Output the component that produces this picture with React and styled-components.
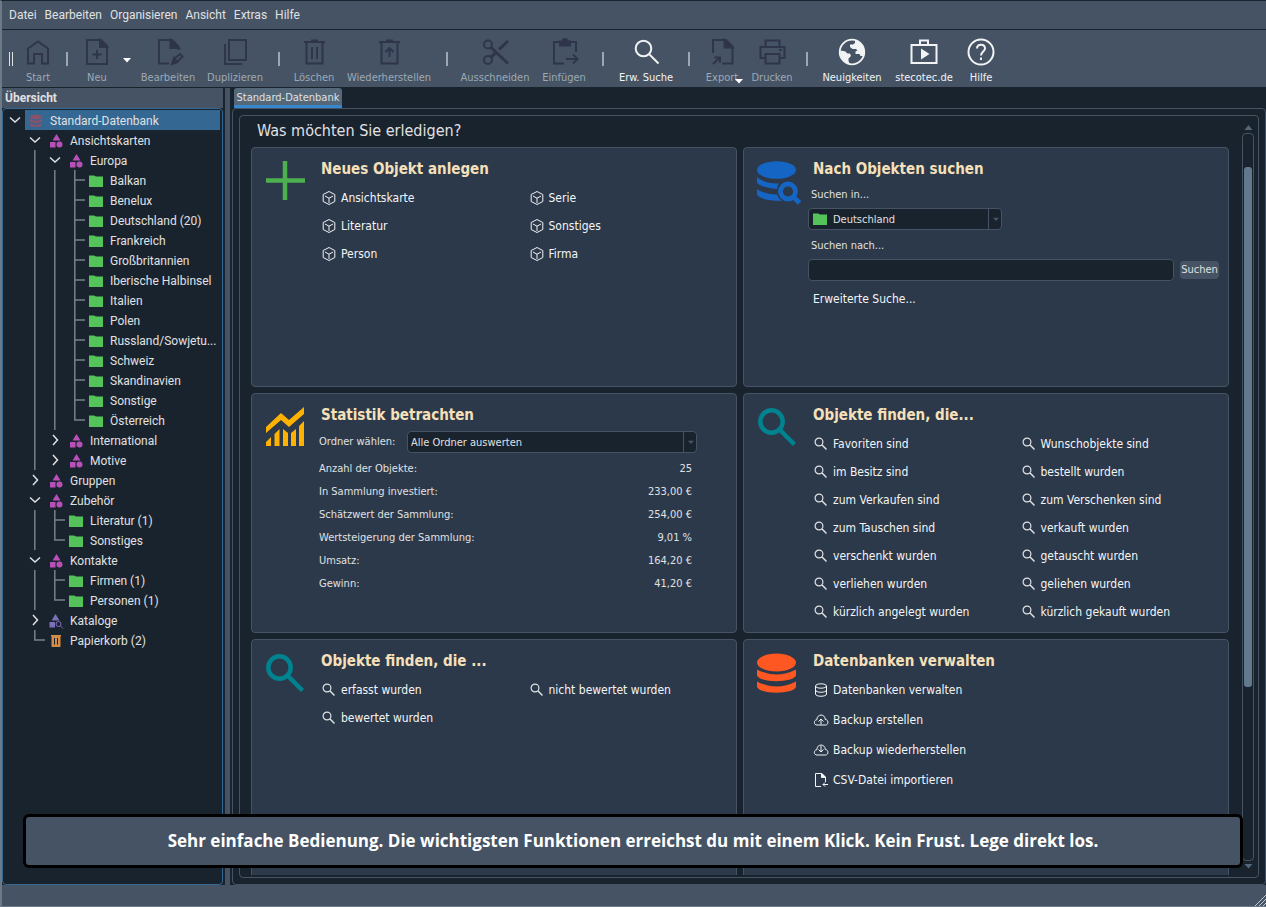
import React from "react";
import styled, { createGlobalStyle } from "styled-components";

const colors = {
  base: "#19232d",
  bar: "#455364",
  card: "#2b394a",
  line: "#455364",
  tab: "#54687a",
  thumb: "#60798b",
  select: "#346792",
  accent: "#3787cf",
  text: "#e0e1e3",
  title: "#f6e0ba",
  muted: "#9da9b5",
  iconOff: "#2f354a",
};

const uiFont = `Roboto, "Open Sans", sans-serif`;
const bannerFont = `"Open Sans", "Noto Sans", sans-serif`;
const dialogFont = `"DejaVu Sans Condensed", "Noto Sans", sans-serif`;

const GlobalStyle = createGlobalStyle`
  * {
    box-sizing: border-box;
  }
  body {
    margin: 0;
    background: ${colors.base};
    color: ${colors.text};
    font-family: ${uiFont};
    font-size: 12px;
  }
  button, input, select {
    font: inherit;
    color: inherit;
  }
`;

const Window = styled.div`
  display: flex;
  flex-direction: column;
  height: 100vh;
  min-width: 1020px;
  border-left: 2px solid #6c7a86;
  border-top: 1px solid ${colors.base};
  overflow: hidden;
  position: relative;
`;

const MenuBar = styled.nav`
  display: flex;
  flex: none;
  align-items: center;
  gap: 8px;
  height: 29px;
  padding: 0 7px;
  background: ${colors.bar};
  border-bottom: 1px solid ${colors.base};
`;

const MenuButton = styled.button`
  padding: 0;
  border: 0;
  background: none;
`;

const ToolBar = styled.div`
  display: flex;
  flex: none;
  height: 57px;
  padding-left: 7px;
  background: ${colors.bar};
`;

const Handle = styled.span`
  align-self: center;
  width: 4px;
  height: 14px;
  margin-right: 5px;
  border: solid ${colors.text};
  border-width: 0 1px;
`;

const Separator = styled.span`
  align-self: center;
  width: 2px;
  height: 14px;
  margin: 0 8px;
  background: #9da6b1;
`;

const Tool = styled.button`
  display: flex;
  flex-direction: column;
  align-items: center;
  gap: 5px;
  width: ${(props) => props.$width}px;
  padding: 8px 0 0;
  border: 0;
  background: none;
  font-family: ${dialogFont};
  font-size: 11px;
  line-height: 14px;
  white-space: nowrap;
  color: #f2f3f4;
  position: relative;
  &:disabled {
    color: ${colors.muted};
  }
  &:disabled > svg:first-child {
    color: ${colors.iconOff};
  }
`;

const ToolArrow = styled.button`
  width: 18px;
  padding: 0;
  border: 0;
  background: none;
  color: #fff;
`;

const ExportArrow = styled.svg`
  position: absolute;
  right: 3px;
  bottom: 3px;
  color: #fff;
`;

const Main = styled.div`
  display: flex;
  flex: 1;
  min-height: 0;
  border-top: 1px solid ${colors.base};
`;

const Dock = styled.aside`
  display: flex;
  flex-direction: column;
  flex: none;
  width: 221px;
`;

const DockTitle = styled.h2`
  margin: 0;
  padding: 0 3px;
  height: 20px;
  line-height: 20px;
  background: ${colors.bar};
  font-size: 12px;
  font-weight: 700;
`;

const Tree = styled.div`
  flex: 1;
  min-height: 0;
  padding: 1px 2px;
  border: 1px solid ${colors.select};
  border-radius: 4px;
`;

const TreeRow = styled.div`
  display: flex;
  height: 20px;
`;

const Slot = styled.svg`
  flex: none;
  width: 20px;
  height: 20px;
  stroke: ${(props) => (props.$guide ? "#77818c" : "#dfe1e4")};
  stroke-width: 1.5;
  fill: none;
`;

const TreeLabel = styled.div`
  display: flex;
  flex: 1;
  align-items: center;
  gap: 6px;
  padding: 1px 0 0 3px;
  line-height: 20px;
  white-space: nowrap;
  background: ${(props) => (props.$selected ? colors.select : "none")};
`;

const Splitter = styled.div`
  flex: none;
  width: 5px;
  margin: 0 2px;
  background: ${colors.bar};
`;

const Pane = styled.section`
  display: flex;
  flex-direction: column;
  flex: 1;
  min-width: 0;
`;

const Tab = styled.button`
  align-self: flex-start;
  width: 108px;
  height: 20px;
  margin-left: 2px;
  padding: 2px 0 0;
  border: 0;
  border-bottom: 3px solid ${colors.accent};
  border-radius: 3px 3px 0 0;
  background: ${colors.tab};
  font-family: ${dialogFont};
  font-size: 11px;
  line-height: 15px;
  white-space: nowrap;
`;

const TabBody = styled.div`
  display: flex;
  flex: 1;
  min-height: 0;
  padding: 6px;
  border: 1px solid ${colors.line};
  border-radius: 4px;
`;

const Frame = styled.div`
  display: flex;
  flex: 1;
  min-width: 0;
  padding-bottom: 2px;
  border: 1px solid ${colors.line};
  border-radius: 4px;
`;

const Scroll = styled.div`
  flex: 1;
  min-width: 0;
  padding-left: 11px;
  overflow: hidden;
`;

const Question = styled.h1`
  margin: 0;
  padding: 4px 6px 0;
  height: 31px;
  font-family: ${dialogFont};
  font-size: 16px;
  line-height: 22px;
  font-weight: 400;
`;

const Cards = styled.div`
  display: grid;
  grid-template-columns: 1fr 1fr;
  grid-auto-rows: 240px;
  gap: 6px;
`;

const CardBox = styled.section`
  display: flex;
  gap: 12px;
  padding: 11px 0 0 13px;
  background: ${colors.card};
  border: 1px solid ${colors.line};
  border-radius: 4px;
  font-family: ${dialogFont};
`;

const CardIcon = styled.svg`
  flex: none;
  width: 44px;
  height: 44px;
  margin-top: 2px;
  color: ${(props) => props.$color};
`;

const CardContent = styled.div`
  flex: 1;
  min-width: 0;
`;

const CardTitle = styled.h2`
  margin: 0 0 5px;
  font-size: 15px;
  line-height: 20px;
  font-weight: 700;
  color: ${colors.title};
`;

const LinkGrid = styled.div`
  display: grid;
  grid-template-columns: ${(props) => (props.$single ? "1fr" : "1fr 1fr")};
  grid-auto-rows: ${(props) => (props.$single ? 30 : 28)}px;
`;

const IconLink = styled.a`
  display: flex;
  align-items: center;
  gap: 4px;
  height: 28px;
  font-size: 12px;
  color: #f4f5f6;
  text-decoration: none;
  white-space: nowrap;
  & svg {
    flex: none;
  }
`;

const Form = styled.form`
  display: flex;
  flex-direction: column;
  align-items: flex-start;
  margin-left: -5px;
  padding-top: 2px;
  font-size: 11px;
`;

const FieldLabel = styled.label`
  padding-left: 3px;
  line-height: 18px;
  white-space: nowrap;
`;

const SelectBox = styled.div`
  position: relative;
  width: ${(props) => props.$width}px;
  height: 22px;
  margin: ${(props) => props.$margin || 0};
`;

const Select = styled.select`
  width: 100%;
  height: 100%;
  padding: 0 20px 0 ${(props) => (props.$icon ? 24 : 3)}px;
  appearance: none;
  background: ${colors.base};
  border: 1px solid ${colors.line};
  border-radius: 4px;
`;

const SelectIcon = styled.span`
  position: absolute;
  left: 4px;
  top: 3px;
  height: 16px;
  pointer-events: none;
`;

const SelectArrow = styled.span`
  position: absolute;
  right: 0;
  top: 0;
  display: grid;
  place-items: center;
  width: 14px;
  height: 22px;
  border-left: 1px solid ${colors.line};
  color: ${colors.line};
  pointer-events: none;
`;

const SearchLine = styled.div`
  display: flex;
  align-items: center;
  gap: 6px;
  width: 100%;
  padding-right: 9px;
  margin: 4px 0;
`;

const SearchInput = styled.input`
  flex: 1;
  min-width: 0;
  height: 22px;
  background: ${colors.base};
  border: 1px solid ${colors.line};
  border-radius: 4px;
`;

const SearchButton = styled.button`
  width: 39px;
  height: 18px;
  padding: 0;
  border: 0;
  border-radius: 4px;
  background: ${colors.bar};
  line-height: 18px;
`;

const FolderLine = styled.div`
  display: flex;
  align-items: center;
  justify-content: space-between;
  margin: 0 39px 4px -5px;
  padding-top: 1px;
  font-size: 11px;
`;

const Stats = styled.table`
  width: calc(100% - 39px);
  margin-left: -2px;
  border-collapse: collapse;
  font-size: 11px;
  & th {
    padding: 0;
    height: 23px;
    font-weight: 400;
    text-align: left;
  }
  & td {
    padding: 0 3px 0 0;
    text-align: right;
  }
`;

const ScrollBar = styled.div`
  display: flex;
  flex-direction: column;
  align-items: center;
  flex: none;
  width: 12px;
  margin: 9px 4px 6px 13px;
  gap: 3px;
  color: ${colors.tab};
`;

const Track = styled.div`
  flex: 1;
  width: 12px;
  padding: 33px 1px 0;
  border: 1px solid ${colors.line};
  border-radius: 4px;
`;

const Thumb = styled.div`
  height: 75%;
  border-radius: 3px;
  background: ${colors.thumb};
`;

const StatusBar = styled.footer`
  display: flex;
  flex: none;
  align-items: flex-end;
  justify-content: flex-end;
  height: 22px;
  background: ${colors.bar};
  border-bottom: 1px solid #6c7a86;
`;

const Banner = styled.div`
  position: absolute;
  left: 21px;
  right: 23px;
  bottom: 39px;
  height: 54px;
  line-height: 47px;
  text-align: center;
  background: ${colors.bar};
  border: 3px solid #000;
  border-radius: 6px;
  font-family: ${bannerFont};
  font-size: 17px;
  font-weight: 700;
  color: #fff;
  white-space: nowrap;
`;

/* ---------- toolbar icons, drawn on a 28px grid ---------- */

const toolIcons = {
  home: <path d="M4 10.500 14 3.500 24 10.500V25.500H18V16H10V25.500H4Z" />,
  file: (
    <>
      <path d="M4 2H18L24 8V26H4Z" />
      <path d="M17 2V9H24Z" fill="currentColor" />
      <path d="M14 12V21M9.500 16.500H18.500" />
    </>
  ),
  edit: (
    <>
      <path d="M15 25.500H5V2H18L24.500 8.500V12" />
      <path d="M16.500 2V10H24.500Z" fill="currentColor" />
      <path d="M19 25 20 21 26 16 28.500 18.500 23 24Z" />
      <path d="M18 26 20 20 23.500 24Z" fill="currentColor" />
    </>
  ),
  copy: (
    <>
      <path d="M8 2H25V22H8Z" />
      <path d="M4 6V26H21" />
    </>
  ),
  trash: (
    <path d="M4 4H25M11 2.500H18M6.500 4V25.500H22.500V4M12 9V21M17 9V21" />
  ),
  restore: (
    <path d="M4 4H25M11 2.500H18M6.500 4V25.500H22.500V4M14.500 19V10M10.500 14 14.500 10 18.500 14" />
  ),
  cut: (
    <>
      <circle cx="7" cy="6.500" r="4" />
      <circle cx="7" cy="22" r="4" />
      <path d="M10 9.500 27 25.500M10 19 14 15.500M18 11.500 27 3" strokeWidth="3" />
    </>
  ),
  paste: (
    <>
      <path d="M14 25.500H4V4H26V14" />
      <path d="M10 3.500V7.500H20V3.500H17.500A2.500 2.500 0 0 0 12.500 3.500Z" fill="currentColor" />
      <path d="M16 21H27M23 16.500 27.500 21 23 25.500" />
    </>
  ),
  search: (
    <>
      <circle cx="11.500" cy="10.500" r="7.800" />
      <path d="M17 16 26.500 25.500" />
    </>
  ),
  export: (
    <>
      <path d="M5 15V2H18L24.500 8.500V25.500H14" />
      <path d="M16.500 2V9.500H24.500Z" fill="currentColor" />
      <path d="M5 26 11.500 20M6.500 19.500H12V25" />
    </>
  ),
  print: (
    <>
      <path d="M7.500 8.500V2.500H21.500V8.500M7.500 20H2.500V9H26.500V20H21.500" />
      <path d="M7.500 16H21.500V25.500H7.500ZM21 12H24" />
    </>
  ),
  globe: (
    <>
      <circle cx="14" cy="14" r="12.300" strokeWidth="1.800" />
      <path
        d="M17 2C22.500 3.500 26.500 8 26.500 14 26.500 15.500 26.300 16.500 25.500 18H22.500L21.500 16H17.500V13.500L19.500 12.500 18 11H14.500L12 9V6.500H15L17 5ZM2 12.500 7 13.200 9.500 15.500H12L13 18 10.500 20.500V23L12 26.500C6.500 25.500 2 20.500 2 12.500Z"
        fill="currentColor"
        stroke="none"
      />
    </>
  ),
  shop: (
    <>
      <path d="M1.500 7H26.500V25H1.500ZM10 7V2.500H18V7" />
      <path d="M11 10.500V21.500L19.500 16Z" fill="currentColor" stroke="none" />
    </>
  ),
  help: (
    <>
      <circle cx="14" cy="14" r="12.500" />
      <path d="M10 10.500C10 5.500 18 5.500 18 10.500 18 13.500 14 13.500 14 17.500M14 19.500V22" />
    </>
  ),
};

const ToolIcon = ({ name }) => (
  <svg
    width="28"
    height="28"
    viewBox="0 0 28 28"
    fill="none"
    stroke="currentColor"
    strokeWidth="2"
    overflow="visible"
    aria-hidden="true"
  >
    {toolIcons[name]}
  </svg>
);

const Down = ({ width = 8, up }) => (
  <svg width={width} height="5" viewBox="0 0 8 5" aria-hidden="true">
    <path d={up ? "M0 5H8L4 0Z" : "M0 0H8L4 4.500Z"} fill="currentColor" />
  </svg>
);

/* ---------- 16px icons ---------- */

const smallIcons = {
  database: (
    <g fill="#86536a">
      <ellipse cx="8" cy="4" rx="6" ry="2.500" />
      <path d="M2 6Q8 9.500 14 6V8.500Q8 12 2 8.500ZM2 10Q8 13.500 14 10V12.500Q8 16 2 12.500Z" />
    </g>
  ),
  category: (
    <g fill="#b94fb8">
      <path d="M8.500 1 12.500 7.500H4.500Z" />
      <path d="M2 9H7.500V14.500H2Z" />
      <circle cx="11.500" cy="11.500" r="3" />
    </g>
  ),
  catalog: (
    <g fill="#7d70b8">
      <path d="M7.500 1 11.500 7.500H3.500Z" />
      <path d="M1.500 9H7V14.500H1.500Z" />
      <circle cx="10.500" cy="11" r="2.500" fill="none" stroke="#7d70b8" />
      <path d="M12.500 13 15 15.500" stroke="#7d70b8" />
    </g>
  ),
  folder: <path d="M1 2.500H6L8 3.500H15V14H1Z" fill="#54c45a" />,
  bin: (
    <>
      <path d="M3 2H13V3.500H12.500V14H3.500V3.500H3Z" fill="#d18d47" />
      <path d="M6.500 5V11.500M9.500 5V11.500" stroke={colors.base} />
    </>
  ),
  cube: (
    <path
      d="M8 1.500 13.800 4.500V11.500L8 14.500 2.200 11.500V4.500ZM4 6 8 8.200 12 6M8 8.200V13"
      fill="none"
      stroke="currentColor"
    />
  ),
  search: (
    <g fill="none" stroke="currentColor" opacity="0.900">
      <circle cx="6" cy="6" r="3.900" strokeWidth="1.200" />
      <path d="M8.800 8.800 13.500 13.500" strokeWidth="1.500" />
    </g>
  ),
  stack: (
    <g fill="none" stroke="currentColor">
      <ellipse cx="8" cy="4" rx="5.500" ry="2.200" />
      <path d="M2.500 4V12C2.500 15 13.500 15 13.500 12V4M2.500 8C2.500 11 13.500 11 13.500 8" />
    </g>
  ),
  upload: (
    <g fill="none" stroke="currentColor">
      <path d="M4 13C.5 13 .5 8 3.800 7.800 4 1.500 12 1.500 12.300 7.500 15.800 7.500 15.800 13 12.500 13Z" />
      <path d="M8 12.500V7M5.500 9.500 8 7 10.500 9.500" />
    </g>
  ),
  download: (
    <g fill="none" stroke="currentColor">
      <path d="M4 13C.5 13 .5 8 3.800 7.800 4 1.500 12 1.500 12.300 7.500 15.800 7.500 15.800 13 12.500 13Z" />
      <path d="M8 4V9.500M5.500 7.500 8 10 10.500 7.500" />
    </g>
  ),
  csv: (
    <g fill="none" stroke="currentColor">
      <path d="M8 14.500H2.500V1.500H9L12.500 5V10" />
      <path d="M8.500 1.500V5.500H12.500Z" fill="currentColor" />
      <path d="M10 12.500H15M12 10.500 10 12.500 12 14.500" />
    </g>
  ),
};

const SmallIcon = ({ name }) => (
  <svg width="16" height="16" viewBox="0 0 16 16" aria-hidden="true">
    {smallIcons[name]}
  </svg>
);

/* ---------- card icons ---------- */

const Plus = () => (
  <CardIcon viewBox="0 0 44 44" $color="#4caf50">
    <path d="M20 0V39M1 19.500H40" stroke="currentColor" strokeWidth="4.500" />
  </CardIcon>
);

const DatabaseSearch = () => (
  <CardIcon viewBox="0 0 44 44" $color="#1565c4">
    <g fill="currentColor">
      <ellipse cx="19.500" cy="9" rx="19.500" ry="8.800" />
      <path d="M0 16Q8 23 22 22.500 20 25 20 28 5 27 0 22ZM0 28Q7 33 20 33.500 21 37 25 40 5 40 0 34Z" />
    </g>
    <circle cx="31" cy="30.500" r="7.500" fill="none" stroke="currentColor" strokeWidth="4.800" />
    <path d="M36.500 36 42.500 42" stroke="currentColor" strokeWidth="4.800" />
  </CardIcon>
);

const DatabaseStack = () => (
  <CardIcon viewBox="0 0 44 44" $color="#ff5722">
    <g fill="currentColor">
      <ellipse cx="19.500" cy="9.500" rx="19.500" ry="9" />
      <path d="M0 16.500Q19.500 26.500 39 16.500V22.500C36 30 3 30 0 22.500ZM0 28.500Q19.500 38.500 39 28.500V34C36 41.500 3 41.500 0 34Z" />
    </g>
  </CardIcon>
);

const Magnifier = () => (
  <CardIcon viewBox="0 0 44 44" $color="#00838f">
    <g fill="none" stroke="currentColor" strokeWidth="4.500">
      <circle cx="14.500" cy="14.500" r="11.200" />
      <path d="M22.500 22.500 37.500 37.500" />
    </g>
  </CardIcon>
);

const Chart = () => (
  <CardIcon viewBox="0 0 44 44" $color="#ffb300">
    <path
      d="M1 26V20L16 6 24 13 39 0V7L24 20 16 13ZM1 35 6 30V39H1ZM9.500 27 14.500 22V39H9.500ZM18 22 23 26V39H18ZM26 26 31 22V39H26ZM34 19 39 14V39H34Z"
      fill="currentColor"
    />
  </CardIcon>
);

/* ---------- data ---------- */

const menus = ["Datei", "Bearbeiten", "Organisieren", "Ansicht", "Extras", "Hilfe"];

const tools = [
  { label: "Start", icon: "home", width: 40, disabled: true },
  { separator: true },
  { label: "Neu", icon: "file", width: 42, disabled: true, arrow: true },
  { label: "Bearbeiten", icon: "edit", width: 64, disabled: true },
  { label: "Duplizieren", icon: "copy", width: 70, disabled: true },
  { separator: true },
  { label: "Löschen", icon: "trash", width: 52, disabled: true },
  { label: "Wiederherstellen", icon: "restore", width: 98, disabled: true },
  { separator: true },
  { label: "Ausschneiden", icon: "cut", width: 78, disabled: true },
  { label: "Einfügen", icon: "paste", width: 60, disabled: true },
  { separator: true },
  { label: "Erw. Suche", icon: "search", width: 68 },
  { separator: true },
  { label: "Export", icon: "export", width: 48, disabled: true, corner: true },
  { label: "Drucken", icon: "print", width: 52, disabled: true },
  { separator: true },
  { label: "Neuigkeiten", icon: "globe", width: 72 },
  { label: "stecotec.de", icon: "shop", width: 72 },
  { label: "Hilfe", icon: "help", width: 42 },
];

// One letter per 20px slot: o open, c closed, l line, t tee, e elbow, _ blank
const tree = [
  ["o", "database", "Standard-Datenbank"],
  ["_o", "category", "Ansichtskarten"],
  ["_lo", "category", "Europa"],
  ["_llt", "folder", "Balkan"],
  ["_llt", "folder", "Benelux"],
  ["_llt", "folder", "Deutschland (20)"],
  ["_llt", "folder", "Frankreich"],
  ["_llt", "folder", "Großbritannien"],
  ["_llt", "folder", "Iberische Halbinsel"],
  ["_llt", "folder", "Italien"],
  ["_llt", "folder", "Polen"],
  ["_llt", "folder", "Russland/Sowjetu..."],
  ["_llt", "folder", "Schweiz"],
  ["_llt", "folder", "Skandinavien"],
  ["_llt", "folder", "Sonstige"],
  ["_lle", "folder", "Österreich"],
  ["_lc", "category", "International"],
  ["_lc", "category", "Motive"],
  ["_c", "category", "Gruppen"],
  ["_o", "category", "Zubehör"],
  ["_lt", "folder", "Literatur (1)"],
  ["_le", "folder", "Sonstiges"],
  ["_o", "category", "Kontakte"],
  ["_lt", "folder", "Firmen (1)"],
  ["_le", "folder", "Personen (1)"],
  ["_c", "catalog", "Kataloge"],
  ["_e", "bin", "Papierkorb (2)"],
];

const slotPaths = {
  _: "",
  o: "M5 7.500 10 12 15 7.500",
  c: "M8 5 12.500 10 8 15",
  l: "M9.800 0V20",
  t: "M9.800 0V20M9.800 10H20",
  e: "M9.800 0V10H20",
};

const newObjects = ["Ansichtskarte", "Serie", "Literatur", "Sonstiges", "Person", "Firma"];

const finders = [
  "Favoriten sind",
  "Wunschobjekte sind",
  "im Besitz sind",
  "bestellt wurden",
  "zum Verkaufen sind",
  "zum Verschenken sind",
  "zum Tauschen sind",
  "verkauft wurden",
  "verschenkt wurden",
  "getauscht wurden",
  "verliehen wurden",
  "geliehen wurden",
  "kürzlich angelegt wurden",
  "kürzlich gekauft wurden",
];

const stats = [
  ["Anzahl der Objekte:", "25"],
  ["In Sammlung investiert:", "233,00 €"],
  ["Schätzwert der Sammlung:", "254,00 €"],
  ["Wertsteigerung der Sammlung:", "9,01 %"],
  ["Umsatz:", "164,20 €"],
  ["Gewinn:", "41,20 €"],
];

const databaseLinks = [
  ["stack", "Datenbanken verwalten"],
  ["upload", "Backup erstellen"],
  ["download", "Backup wiederherstellen"],
  ["csv", "CSV-Datei importieren"],
];

/* ---------- parts ---------- */

const Card = ({ icon, title, children }) => (
  <CardBox>
    {icon}
    <CardContent>
      <CardTitle>{title}</CardTitle>
      {children}
    </CardContent>
  </CardBox>
);

const Links = ({ items, icon }) => (
  <LinkGrid>
    {items.map((item) => (
      <IconLink href="#" key={item}>
        <SmallIcon name={icon} />
        {item}
      </IconLink>
    ))}
  </LinkGrid>
);

const Combo = ({ id, value, icon, width, margin }) => (
  <SelectBox $width={width} $margin={margin}>
    <Select id={id} $icon={icon} defaultValue={value}>
      <option>{value}</option>
    </Select>
    {icon && (
      <SelectIcon>
        <SmallIcon name={icon} />
      </SelectIcon>
    )}
    <SelectArrow>
      <Down width={6} />
    </SelectArrow>
  </SelectBox>
);

const App = () => (
  <Window>
    <GlobalStyle />
    <MenuBar>
      {menus.map((menu) => (
        <MenuButton key={menu}>{menu}</MenuButton>
      ))}
    </MenuBar>
    <ToolBar>
      <Handle />
      {tools.map((tool, i) =>
        tool.separator ? (
          <Separator key={i} />
        ) : (
          <React.Fragment key={i}>
            <Tool $width={tool.width} disabled={tool.disabled}>
              <ToolIcon name={tool.icon} />
              {tool.label}
              {tool.corner && (
                <ExportArrow width="8" height="5" viewBox="0 0 8 5">
                  <path d="M0 0H8L4 4.500Z" fill="currentColor" />
                </ExportArrow>
              )}
            </Tool>
            {tool.arrow && (
              <ToolArrow aria-label="Neu auswählen">
                <Down />
              </ToolArrow>
            )}
          </React.Fragment>
        )
      )}
    </ToolBar>
    <Main>
      <Dock>
        <DockTitle>Übersicht</DockTitle>
        <Tree>
          {tree.map(([slots, icon, label], i) => (
            <TreeRow key={label}>
              {slots.split("").map((slot, n) => (
                <Slot key={n} viewBox="0 0 20 20" $guide={"lte".includes(slot)}>
                  <path d={slotPaths[slot]} />
                </Slot>
              ))}
              <TreeLabel $selected={i === 0}>
                <SmallIcon name={icon} />
                {label}
              </TreeLabel>
            </TreeRow>
          ))}
        </Tree>
      </Dock>
      <Splitter />
      <Pane>
        <Tab>Standard-Datenbank</Tab>
        <TabBody>
          <Frame>
            <Scroll>
              <Question>Was möchten Sie erledigen?</Question>
              <Cards>
                <Card icon={<Plus />} title="Neues Objekt anlegen">
                  <Links items={newObjects} icon="cube" />
                </Card>
                <Card icon={<DatabaseSearch />} title="Nach Objekten suchen">
                  <Form>
                    <FieldLabel htmlFor="folder">Suchen in...</FieldLabel>
                    <Combo
                      id="folder"
                      value="Deutschland"
                      icon="folder"
                      width={194}
                      margin="4px 0 7px"
                    />
                    <FieldLabel htmlFor="term">Suchen nach...</FieldLabel>
                    <SearchLine>
                      <SearchInput id="term" type="text" />
                      <SearchButton type="button">Suchen</SearchButton>
                    </SearchLine>
                  </Form>
                  <IconLink href="#">Erweiterte Suche...</IconLink>
                </Card>
                <Card icon={<Chart />} title="Statistik betrachten">
                  <FolderLine>
                    <FieldLabel htmlFor="stats">Ordner wählen:</FieldLabel>
                    <Combo id="stats" value="Alle Ordner auswerten" width={290} />
                  </FolderLine>
                  <Stats>
                    <tbody>
                      {stats.map(([name, value]) => (
                        <tr key={name}>
                          <th scope="row">{name}</th>
                          <td>{value}</td>
                        </tr>
                      ))}
                    </tbody>
                  </Stats>
                </Card>
                <Card icon={<Magnifier />} title="Objekte finden, die...">
                  <Links items={finders} icon="search" />
                </Card>
                <Card icon={<Magnifier />} title="Objekte finden, die ...">
                  <Links
                    items={["erfasst wurden", "nicht bewertet wurden", "bewertet wurden"]}
                    icon="search"
                  />
                </Card>
                <Card icon={<DatabaseStack />} title="Datenbanken verwalten">
                  <LinkGrid $single>
                    {databaseLinks.map(([icon, label]) => (
                      <IconLink href="#" key={label}>
                        <SmallIcon name={icon} />
                        {label}
                      </IconLink>
                    ))}
                  </LinkGrid>
                </Card>
              </Cards>
            </Scroll>
            <ScrollBar>
              <Down width={11} up />
              <Track>
                <Thumb />
              </Track>
              <Down width={11} />
            </ScrollBar>
          </Frame>
        </TabBody>
      </Pane>
    </Main>
    <StatusBar>
      <svg width="12" height="12" viewBox="0 0 12 12" aria-hidden="true">
        <path d="M1 12 12 1M5 12 12 5M9 12 12 9" stroke="#c5cad0" />
      </svg>
    </StatusBar>
    <Banner>
      Sehr einfache Bedienung. Die wichtigsten Funktionen erreichst du mit einem
      Klick. Kein Frust. Lege direkt los.
    </Banner>
  </Window>
);

export default App;
